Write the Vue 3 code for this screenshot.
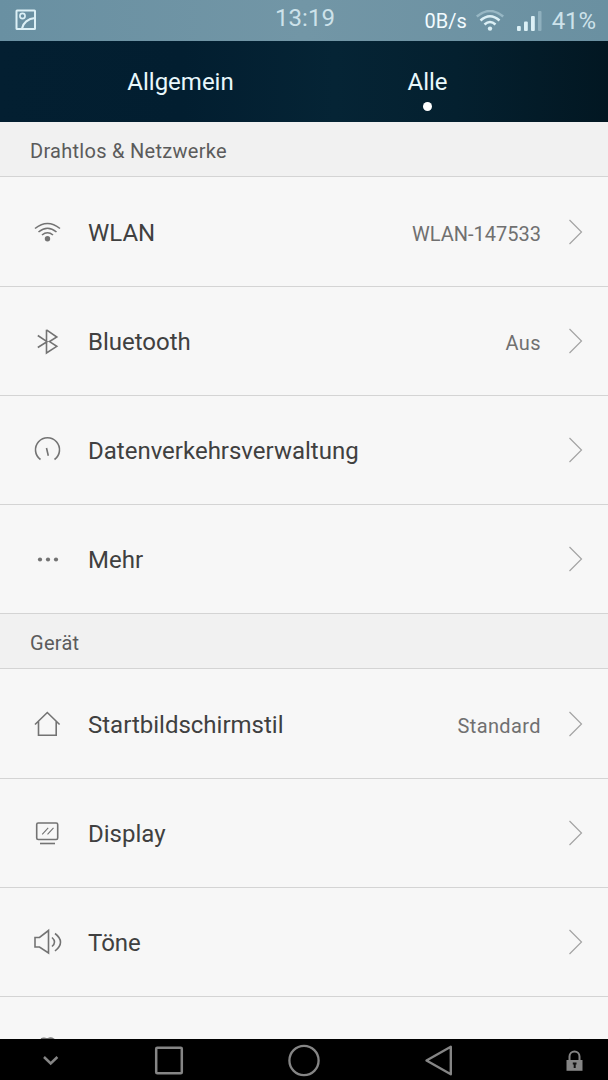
<template>
    <div class="screen">
        <!-- Status bar -->
        <div class="status-bar">
            <div class="status-left">
                <svg width="22" height="22" viewBox="0 0 22 22" fill="none" stroke="#dcf0f6" stroke-width="2">
                    <rect x="1.5" y="1.5" width="18.5" height="18.5" rx="0.5" />
                    <circle cx="7.5" cy="7" r="2.6" stroke-width="1.6" />
                    <path d="M7 19.5C8 14 13 9.500 20 9" />
                </svg>
            </div>
            <div class="clock">13:19</div>
            <div class="status-right">
                <span class="speed">0B/s</span>
                <svg class="wifi" width="28" height="22" viewBox="0 0 28 22" fill="none" stroke-width="2.5">
                    <path d="M.8 6.500Q14-4.500 27.200 6.500" stroke="#97b7c4" />
                    <path d="M4.500 10.500Q14 2 23.500 10.500" stroke="#dcf0f6" />
                    <path d="M8.500 14.500Q14 9.500 19.500 14.500" stroke="#dcf0f6" />
                    <circle cx="14" cy="18.600" r="2.200" fill="#dcf0f6" />
                </svg>
                <svg class="signal" width="26" height="22" viewBox="0 0 26 22" fill="#dcf0f6">
                    <rect x="1" y="16" width="3.800" height="5" rx="1" />
                    <rect x="8" y="11.500" width="3.800" height="9.500" rx="1" />
                    <rect x="15" y="6" width="3.800" height="15" rx="1" />
                    <rect x="22" y="1" width="3.500" height="20" rx="1" fill="#8fb0be" />
                </svg>
                <span class="battery">41%</span>
            </div>
        </div>

        <!-- Tabs -->
        <div class="tabs">
            <div
                v-for="tab in tabs"
                :key="tab"
                class="tab"
                :class="{ active: activeTab === tab }"
                @click="activeTab = tab"
            >
                <span class="tab-label">{{ tab }}</span>
                <i class="tab-dot"></i>
            </div>
        </div>

        <!-- Settings list -->
        <div class="list">
            <section v-for="section in sections" :key="section.title">
                <h2 class="section-title">{{ section.title }}</h2>
                <div v-for="item in section.items" :key="item.icon" class="row">
                    <svg class="row-icon" width="34" height="34" viewBox="0 0 34 34">
                        <template v-if="item.icon === 'wifi'">
                            <path d="M5 13.500Q17.500 3.500 30 13.500M8.500 17Q17.500 9.500 26.500 17M12 20Q17.500 15.500 23 20" />
                            <circle cx="17.500" cy="23.800" r="2.700" class="filled" />
                        </template>
                        <path v-else-if="item.icon === 'bluetooth'" d="M7.800 11.500L17 17.700L7.800 23.500M16.500 5.800V29L26.800 22.300L19.500 17.600L26.800 13L16.500 5.800" />
                        <path v-else-if="item.icon === 'data'" d="M10.500 26.500A12 12 0 1 1 24.500 26.500M16.500 15L18.300 22.800" />
                        <g v-else-if="item.icon === 'more'" class="filled">
                            <circle cx="10" cy="17.500" r="2.100" />
                            <circle cx="18" cy="17.500" r="2.100" />
                            <circle cx="26" cy="17.500" r="2.100" />
                        </g>
                        <path v-else-if="item.icon === 'home'" d="M5 17.500L17.300 5.500L29.600 17.500M8.500 14.500V28.300H26.200V14.500" />
                        <template v-else-if="item.icon === 'display'">
                            <rect x="6.700" y="7" width="21" height="16.500" rx="1.500" />
                            <path d="M10 27.500H25" />
                            <path d="M12.200 18.300L18.200 11.800M17.500 18.300L23.500 11.800" stroke-width="1.100" />
                        </template>
                        <path v-else-if="item.icon === 'sound'" d="M5 12.500H9.500L18.500 5.500V28L9.500 22H5ZM22 12.500Q27 17 22 21.500M25 8.500Q36 17 25 26" />
                        <path v-else d="M11 5Q14 3.500 16.500 5M18.500 4.500Q21 3.500 24 5.500V16H10V6Z" />
                    </svg>
                    <span class="row-label">{{ item.label }}</span>
                    <span class="row-value" :class="{ spaced: item.spaced }">{{ item.value }}</span>
                    <svg class="chevron" width="15" height="26" viewBox="0 0 15 26">
                        <path d="M1.500 1L13.500 13L1.500 25" />
                    </svg>
                </div>
            </section>
        </div>

        <!-- Navigation bar -->
        <div class="nav-bar">
            <svg width="608" height="41" viewBox="0 0 608 41" fill="none" stroke="#858585">
                <path d="M44 18L50.700 24.500L57.400 18" stroke-width="2.500" />
                <rect x="156.200" y="8.700" width="25.600" height="25.600" rx="1" stroke-width="2.500" />
                <circle cx="304" cy="21.500" r="14.600" stroke-width="2.300" />
                <path d="M426.500 21.500L450.800 7.800V35.200Z" stroke-width="2.400" stroke-linejoin="round" />
                <path d="M569.500 21V17.500A5 5 0 0 1 579.500 17.500V21" stroke-width="2" />
                <path d="M566.500 21H582.500V31.800H566.500Z" fill="#858585" stroke="none" />
                <path d="M574.700 23.500V29M572.800 24.500H576.500" stroke="#111" stroke-width="2" />
            </svg>
        </div>
    </div>
</template>

<script setup>
import { ref } from 'vue'

const tabs = ['Allgemein', 'Alle']
const activeTab = ref('Alle')

const sections = [
    {
        title: 'Drahtlos & Netzwerke',
        items: [
            { icon: 'wifi', label: 'WLAN', value: 'WLAN-147533' },
            { icon: 'bluetooth', label: 'Bluetooth', value: 'Aus', spaced: true },
            { icon: 'data', label: 'Datenverkehrsverwaltung' },
            { icon: 'more', label: 'Mehr' }
        ]
    },
    {
        title: 'Gerät',
        items: [
            { icon: 'home', label: 'Startbildschirmstil', value: 'Standard', spaced: true },
            { icon: 'display', label: 'Display' },
            { icon: 'sound', label: 'Töne' },
            { icon: 'storage', label: '' }
        ]
    }
]
</script>

<style>
body {
    margin: 0;
    overflow: hidden;
}
</style>

<style scoped>
.screen {
    display: flex;
    flex-direction: column;
    width: 608px;
    height: 1080px;
    overflow: hidden;
    background: #f7f7f7;
    font-family: Roboto, sans-serif;
}

.status-bar {
    display: grid;
    grid-template-columns: 1fr auto 1fr;
    flex: none;
    height: 41px;
    box-sizing: border-box;
    padding: 0 12px 0 14px;
    background: linear-gradient(90deg, #6990a2, #7296a6 50%, #6a90a1);
    color: #cde2ea;
}

.status-left {
    padding: 9px 0 0 1px;
}

.clock {
    font-size: 24px;
    line-height: 36px;
}

.status-right {
    display: flex;
    justify-content: flex-end;
    line-height: 43px;
}

.speed {
    font-size: 20px;
    color: #f2fbff;
}

.wifi {
    margin: 10px 0 0 9px;
}

.signal {
    margin: 10px 0 0 12px;
}

.battery {
    margin-left: 10px;
    font-size: 24px;
    letter-spacing: -0.1px;
}

.tabs {
    display: flex;
    flex: none;
    height: 81px;
    box-sizing: border-box;
    padding: 0 57px;
    background: linear-gradient(90deg, #031f31, #021e30 30%, #052435 55%, #04202f 75%, #021722);
}

.tab {
    display: flex;
    flex: 1;
    flex-direction: column;
    align-items: center;
    color: #e9f8fc;
}

.tab-label {
    margin-top: 27px;
    font-size: 24px;
    line-height: 28px;
}

.tab-dot {
    width: 9px;
    height: 9px;
    margin-top: 6px;
    border-radius: 50%;
}

.tab.active .tab-dot {
    background: #fff;
}

.list {
    flex: 1;
    min-height: 0;
    overflow: hidden;
}

.section-title {
    height: 55px;
    margin: 0;
    box-sizing: border-box;
    padding-left: 30px;
    border-bottom: 1px solid #d4d4d4;
    background: #f1f1f1;
    color: #5b5b5b;
    font-size: 20px;
    font-weight: 400;
    line-height: 59px;
    letter-spacing: 0.28px;
}

.row {
    display: flex;
    align-items: center;
    height: 109px;
    box-sizing: border-box;
    padding: 0 25px 1px 30px;
    border-bottom: 1px solid #d4d4d4;
}

.section-title + .row {
    height: 110px;
    padding: 1px 25px 0 30px;
}

.row-icon {
    flex: none;
    fill: none;
    stroke: #737373;
    stroke-width: 1.6;
}

.row-icon .filled {
    fill: #737373;
    stroke: none;
}

.row-label {
    margin-left: 24px;
    padding-top: 2px;
    color: #404040;
    font-size: 24px;
}

.row-value {
    margin-left: auto;
    padding-top: 4px;
    color: #707070;
    font-size: 20px;
}

.row-value.spaced {
    letter-spacing: 0.4px;
}

.chevron {
    margin-left: 27px;
    fill: none;
    stroke: #a3a3a3;
    stroke-width: 1.2;
}

.nav-bar {
    flex: none;
    height: 41px;
    background: #000;
}

.nav-bar svg {
    display: block;
}
</style>
